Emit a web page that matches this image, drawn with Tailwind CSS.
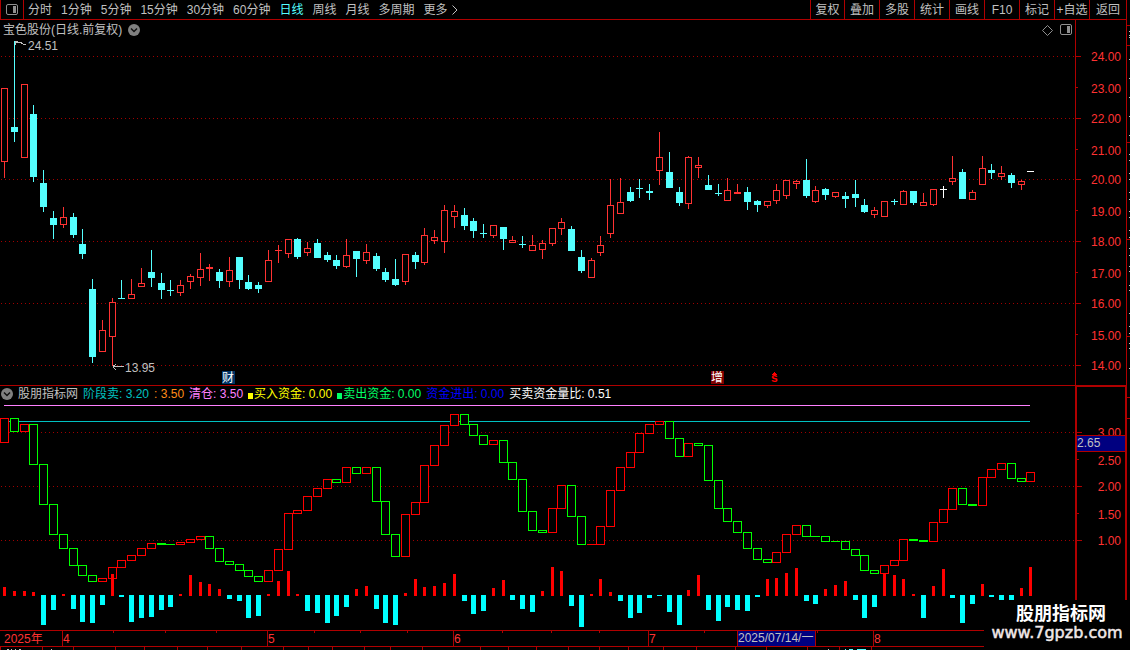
<!DOCTYPE html>
<html lang="zh-CN">
<head>
    <meta charset="UTF-8">
    <meta name="viewport" content="width=device-width, initial-scale=1.0">
    <title>宝色股份 日线</title>

    <!-- Tailwind CSS -->
    <script src="https://cdn.jsdelivr.net/npm/@tailwindcss/browser@4"></script>
</head>
<body class="relative flex min-h-screen overflow-hidden bg-black font-['Liberation_Sans','Noto_Sans_CJK_SC',sans-serif] text-[12px] leading-4 text-[#c0c0c0]">
    <div class="flex min-w-0 flex-1 flex-col border-r border-[#b00000]">

        <!-- Toolbar -->
        <header class="flex h-5 items-stretch border-b border-[#b00000]">
            <button type="button" aria-label="侧栏" class="flex w-6 items-center justify-center border-x border-[#b00000]">
                <svg class="h-3 w-3" viewBox="0 0 12 12" fill="none">
                    <rect x="0.5" y="0.5" width="11" height="10" rx="1.5" stroke="#909090"/>
                    <rect x="7" y="2" width="3" height="7" fill="#909090"/>
                </svg>
            </button>
            <nav class="ml-1 flex items-center gap-[9px] whitespace-nowrap">
                <button type="button">分时</button>
                <button type="button">1分钟</button>
                <button type="button">5分钟</button>
                <button type="button">15分钟</button>
                <button type="button">30分钟</button>
                <button type="button">60分钟</button>
                <button type="button" class="text-[#54ffff]">日线</button>
                <button type="button">周线</button>
                <button type="button">月线</button>
                <button type="button">多周期</button>
                <button type="button" class="flex items-center gap-1">更多
                    <svg class="h-[10px] w-[6px]" viewBox="0 0 6 10" fill="none" stroke="#c0c0c0">
                        <path d="M0.5 0.5L5 5L0.5 9.5"/>
                    </svg>
                </button>
            </nav>
            <div class="ml-auto flex whitespace-nowrap">
                <button type="button" class="w-[34px] border-l border-[#b00000]">复权</button>
                <button type="button" class="w-[35px] border-l border-[#b00000]">叠加</button>
                <button type="button" class="w-[35px] border-l border-[#b00000]">多股</button>
                <button type="button" class="w-[35px] border-l border-[#b00000]">统计</button>
                <button type="button" class="w-[35px] border-l border-[#b00000]">画线</button>
                <button type="button" class="w-[35px] border-l border-[#b00000]">F10</button>
                <button type="button" class="w-[35px] border-l border-[#b00000]">标记</button>
                <button type="button" class="w-[35px] border-l border-[#b00000]">+自选</button>
                <button type="button" class="w-[37px] border-l border-[#b00000]">返回</button>
            </div>
        </header>

        <!-- Price chart -->
        <section class="flex">
            <div class="min-w-0 flex-1">
                <div class="flex h-5 items-center px-[3px]">
                    <h1>宝色股份(日线.前复权)</h1>
                    <button type="button" aria-label="展开" class="ml-[6px]">
                        <svg class="h-3 w-3" viewBox="0 0 12 12" fill="none">
                            <circle cx="6" cy="6" r="6" fill="#808080"/>
                            <path d="M3 4.5L6 7.5L9 4.5" stroke="#101010" stroke-width="1.5"/>
                        </svg>
                    </button>
                    <svg class="ml-auto h-[11px] w-[11px]" viewBox="0 0 11 11" fill="none" stroke="#909090">
                        <path d="M5.5 0.5L10.5 5.5L5.5 10.5L0.5 5.5Z"/>
                    </svg>
                    <svg class="ml-[7px] h-3 w-3" viewBox="0 0 12 12" fill="none">
                        <rect x="0.5" y="0.5" width="11" height="10" rx="1.5" stroke="#909090"/>
                        <rect x="7" y="2" width="3" height="7" fill="#909090"/>
                    </svg>
                </div>
                <svg class="block h-[345px] w-full" shape-rendering="crispEdges">
                    <g transform="translate(0 -40)">
                        <g id="priceGrid" stroke="#a00000" stroke-dasharray="1 3"></g>
                        <g id="candles"></g>
                        <path d="M15 41.5H18M15 42V45M16 42.5L20 42L23 44L26 44.5" fill="none" stroke="#c0c0c0"/>
                        <text x="28" y="50" fill="#c0c0c0">24.51</text>
                        <path d="M113 366.5H124M113 366.5L116 364M113 366.5L116 370" fill="none" stroke="#c0c0c0"/>
                        <text x="125" y="372" fill="#c0c0c0">13.95</text>
                        <rect x="222" y="371" width="13" height="13" fill="#003366"/>
                        <text x="222" y="382" fill="#ffffff">财</text>
                        <rect x="711" y="371" width="13" height="13" fill="#800000"/>
                        <text x="711" y="382" fill="#ffffff">增</text>
                        <path d="M772 375L774.5 372L777 375Z" fill="#ff0000"/>
                        <text x="771" y="382" fill="#ff0000" font-weight="bold">s</text>
                    </g>
                </svg>
            </div>
            <svg class="block h-[365px] w-[51px] border-l border-[#b00000]" shape-rendering="crispEdges">
                <g id="priceAxis" transform="translate(0 -20)" fill="#ff3232" text-anchor="end"></g>
            </svg>
        </section>

        <!-- Indicator -->
        <section class="flex">
            <div class="min-w-0 flex-1 border-t border-[#b00000]">
                <div class="flex h-4 items-center gap-[5px] whitespace-nowrap pl-px">
                    <button type="button" aria-label="展开">
                        <svg class="h-3 w-3" viewBox="0 0 12 12" fill="none">
                            <circle cx="6" cy="6" r="6" fill="#808080"/>
                            <path d="M3 4.5L6 7.5L9 4.5" stroke="#101010" stroke-width="1.5"/>
                        </svg>
                    </button>
                    <span>股朋指标网</span>
                    <span class="text-[#00c0c0]">阶段卖: 3.20</span>
                    <span class="text-[#ff8c1a]">: 3.50</span>
                    <span class="text-[#ff80ff]">清仓: 3.50</span>
                    <span class="flex items-center gap-px text-[#ffff00]"><i class="mt-1 h-[6px] w-[5px] bg-[#ffff00]"></i>买入资金: 0.00</span>
                    <span class="flex items-center gap-px text-[#00ff66]"><i class="mt-1 h-[6px] w-[5px] bg-[#00ff66]"></i>卖出资金: 0.00</span>
                    <span class="text-[#0000ff]">资金进出: 0.00</span>
                    <span class="text-white">买卖资金量比: 0.51</span>
                </div>
                <svg class="block h-[228px] w-full" shape-rendering="crispEdges">
                    <g transform="translate(0 -402)">
                        <g id="flowGrid" stroke="#a00000" stroke-dasharray="1 3"></g>
                        <rect x="4" y="405" width="1026" height="1" fill="#ff80ff"/>
                        <rect x="4" y="421" width="1026" height="1" fill="#00c0c0"/>
                        <g id="steps"></g>
                        <g id="flow"></g>
                    </g>
                </svg>
            </div>
            <div class="relative w-[51px] border-2 border-r border-b-0 border-[#b00000]">
                <svg class="block h-[243px] w-full" shape-rendering="crispEdges">
                    <g id="flowAxis" transform="translate(0 -387)" fill="#ff3232" text-anchor="end"></g>
                </svg>
                <div class="absolute inset-x-0 top-12 h-[17px] border-y border-[#b00000] bg-[#000080] leading-[15px]">2.65</div>
            </div>
        </section>

        <!-- Date axis -->
        <footer>
            <svg class="block h-[17px] w-full border-y border-[#b00000]" shape-rendering="crispEdges">
                <g id="dateAxis" fill="#b00000"></g>
                <g fill="#ff3232">
                    <text x="4" y="12">2025年</text>
                    <text x="63" y="12">4</text>
                    <text x="268" y="12">5</text>
                    <text x="454" y="12">6</text>
                    <text x="649" y="12">7</text>
                    <text x="874" y="12">8</text>
                </g>
                <rect x="737" y="0" width="79" height="15" fill="#b00000"/>
                <rect x="738" y="0" width="77" height="15" fill="#000080"/>
                <text x="738" y="11" fill="#c0c0c0">2025/07/14/一</text>
            </svg>
            <svg class="block h-[3px] w-full" shape-rendering="crispEdges">
                <g id="stripTicks" fill="#b00000"></g>
                <path d="M7 2.5H9M11 2.5H12M15 2.5H16M19 2.5H21M51 2.5H52M828 2.5H829" stroke="#c0c0c0"/>
                <path d="M845 2.5H846M849 2.5H853M857 2.5H866" stroke="#54ffff"/>
            </svg>
        </footer>
    </div>

    <!-- Neighbouring scale at the window edge -->
    <svg class="block w-[3px] self-stretch" shape-rendering="crispEdges">
        <g id="edgeTicks"></g>
    </svg>

    <!-- Site badge -->
    <div class="absolute bottom-0 right-0 flex h-[50px] w-[146px] flex-col items-center bg-black pt-1 text-white">
        <strong class="pl-2 text-[18px] leading-5">股朋指标网</strong>
        <span class="font-['DejaVu_Sans',sans-serif] text-[16px] leading-[18px] text-[#f0e8e8] [-webkit-text-stroke:0.5px_#f0e8e8]">www.7gpzb.com</span>
    </div>

    <script>
        // kind (r hollow, c solid, w white), high, body top, body bottom, low
        const candles = `r 88 88 161 177|c 41 127 131 141|r 84 84 157 157|c 105 114 176 181|c 170 183 206 211|c 211 218 224 238|r 207 217 224 227|c 213 217 234 237|c 229 244 253 258|c 279 289 356 362|r 320 330 351 351|r 298 302 336 365|c 280 298 298 298|r 279 294 298 298|r 268 283 286 286|c 250 272 277 286|c 273 283 289 298|c 280 290 290 295|r 280 285 292 295|r 274 276 281 288|r 253 269 277 285|r 264 267 268 280|c 269 272 280 287|r 257 270 281 286|c 257 257 279 288|c 275 282 288 289|c 282 285 288 292|r 250 260 281 281|r 245 250 250 262|r 239 239 253 257|c 238 239 256 258|r 242 248 252 255|c 239 243 257 257|c 252 255 259 261|c 255 260 265 268|r 239 255 266 267|c 251 251 258 276|r 244 252 260 263|c 253 256 268 270|c 268 272 279 281|c 259 279 284 285|r 254 254 281 284|c 252 255 261 268|r 228 235 262 264|r 230 237 240 243|r 205 210 241 252|r 205 211 216 227|c 208 215 225 229|c 218 221 230 237|c 224 233 233 237|r 225 225 235 237|c 227 227 238 249|r 236 240 242 242|c 236 244 244 247|r 235 245 250 250|r 240 243 249 258|r 228 228 243 245|r 218 222 228 234|c 226 229 250 250|c 250 257 270 272|r 258 260 277 277|r 236 245 252 255|r 179 205 233 237|r 178 202 213 213|c 187 192 200 201|c 179 188 188 197|c 184 191 192 199|r 132 157 170 184|c 152 172 187 187|c 187 192 202 205|r 156 157 203 208|r 157 165 167 177|c 175 185 189 189|c 184 193 193 195|r 178 190 200 200|r 184 192 193 193|c 187 192 201 209|c 200 201 204 211|r 201 201 205 207|r 184 190 200 203|r 180 180 195 198|r 180 181 183 188|c 159 180 195 197|r 186 190 201 202|c 188 189 194 199|r 192 192 196 197|c 192 196 198 207|c 180 194 197 206|c 199 205 211 212|r 207 210 214 217|r 201 201 216 216|c 199 201 201 204|r 190 191 204 204|c 191 191 202 204|r 193 202 205 205|r 189 189 204 205|w 186 189 189 197|r 156 178 181 184|c 169 172 198 198|r 190 192 199 199|r 156 168 184 184|c 164 170 172 178|r 166 173 176 179|c 173 175 182 187|r 180 181 184 189|w 171 171 171 171`;

        // levels of the stepped indicator line, first entry is the opening level
        const levels = [442, 418, 431, 424, 464, 504, 534, 548, 565, 575, 581, 578, 567, 560, 555, 548, 543, 544, 544, 542, 539, 536, 548, 561, 564, 570, 576, 581, 570, 549, 513, 510, 496, 488, 479, 482, 467, 473, 467, 501, 534, 556, 514, 502, 465, 445, 425, 414, 424, 435, 444, 440, 462, 479, 511, 530, 532, 508, 485, 516, 544.2, 544, 526, 490, 467, 452, 433, 424, 421, 438, 456, 443, 445, 480, 508, 521, 532, 548, 559, 562, 552, 534, 525, 536, 536, 541, 541, 549, 555, 570, 573, 565, 560, 539, 540, 541, 522, 509, 488, 504, 505, 477, 469, 463, 478, 481, 472];

        // end of each fund flow bar, above or below the 595 baseline
        const flow = [587, 591, 591, 592, 625, 610, 594, 609, 622, 623, 605, 574, 597, 622, 618, 617, 610, 607, 594, 575, 582, 584, 589, 599, 601, 618, 616, 594, 581, 571, 594, 611, 613, 623, 616, 607, 589, 586, 609, 623, 625, 593, 579, 587, 586, 583, 574, 601, 614, 611, 588, 580, 600, 609, 612, 591, 567, 571, 606, 627, 594, 579, 592, 601, 618, 613, 598, 596, 612, 625, 590, 575, 610, 621, 607, 610, 611, 597, 579, 578, 573, 568, 601, 604, 589, 585, 581, 600, 618, 607, 573, 575, 579, 594, 618, 586, 569, 598, 623, 604, 584, 597, 600, 600, 588, 567];

        const colors = { r: '#ff3232', c: '#54ffff', w: '#ffffff' };
        const centerX = i => Math.floor(i * 9.775 + 4.61);
        const rect = (x, y, w, h, fill) => `<rect x="${x}" y="${y}" width="${w}" height="${h}" fill="${fill}"/>`;
        const box = (x, y, w, h, color) => rect(x, y, w, h, color) + (h > 2 ? rect(x + 1, y + 1, w - 2, h - 2, '#000000') : '');
        const put = (id, html) => document.getElementById(id).innerHTML = html;

        put('candles', candles.split('|').map((row, i) => {
            const [kind, ...v] = row.split(' ');
            const [high, top, bottom, low] = v.map(Number);
            const x = centerX(i);
            const body = kind === 'r' ? box : rect;
            return rect(x, high, 1, low - high + 1, colors[kind]) + body(x - 3, top, 7, bottom - top + 1, colors[kind]);
        }).join(''));

        put('steps', levels.slice(1).map((level, i) => {
            const prev = levels[i];
            const top = Math.round(Math.min(prev, level));
            const bottom = Math.round(Math.max(prev, level));
            return box(centerX(i) - 4, top, 9, bottom - top + 1, level < prev ? '#ff0000' : '#00ff00');
        }).join(''));

        put('flow', flow.map((y, i) => y < 595
            ? rect(centerX(i) - 1, y, 3, 596 - y, '#ff0000')
            : rect(centerX(i) - 2, 595, 5, y - 595, '#00ffff')).join(''));

        const gridLine = y => `<line x1="1" x2="100%" y1="${y + 0.5}" y2="${y + 0.5}"/>`;
        put('priceGrid', [56, 118, 179, 241, 303, 365].map(gridLine).join(''));
        put('flowGrid', [432, 486, 540].map(gridLine).join(''));

        const tick = (y, major) => rect(0, y, major ? 5 : 2, 1, '#b00000');
        const label = (x, y, value) => `<text x="${x}" y="${y}">${value.toFixed(2)}</text>`;
        put('priceAxis', [[56, 61], [87, 93], [118, 123], [149, 155], [179, 184], [210, 216], [241, 246], [272, 278], [303, 308], [334, 340], [365, 370]]
            .map(([y, base], i) => tick(y, i % 2 === 0) + label(45, base, 24 - i)).join(''));
        put('flowAxis', [[432, 437], [459, 465], [486, 491], [513, 519], [540, 545]]
            .map(([y, base], i) => tick(y, i % 2 === 0) + label(44, base, 3 - i * 0.5)).join(''));

        put('dateAxis', [62, 267, 453, 648, 873].map(x => rect(x, 0, 1, 15, '#b00000')).join('')
            + [113, 165, 216, 314, 360, 407, 502, 551, 599, 704, 817].map(x => rect(x, 0, 1, 2, '#b00000')).join(''));
        put('stripTicks', [0, 42, 73, 115, 144, 177, 207, 241, 283, 308, 332, 364, 390, 422, 480, 508, 536, 568, 599, 628, 663, 696, 735, 766, 807, 839, 871]
            .map(x => rect(x, 0, 1, 3, '#b00000')).join(''));
        put('edgeTicks', [25, 45, 142, 239, 336, 397, 418].map(y => rect(0, y, 3, 1, '#b00000')).join('')
            + [31, 35, 37, 59, 78, 97, 116, 135, 154, 160, 173, 179, 192, 199, 211, 217, 230, 237, 248, 255, 266, 271, 285, 290, 313, 326, 333, 343, 348, 368].map(y => rect(2, y, 1, 1, '#c0c0c0')).join(''));
    </script>
</body>
</html>
